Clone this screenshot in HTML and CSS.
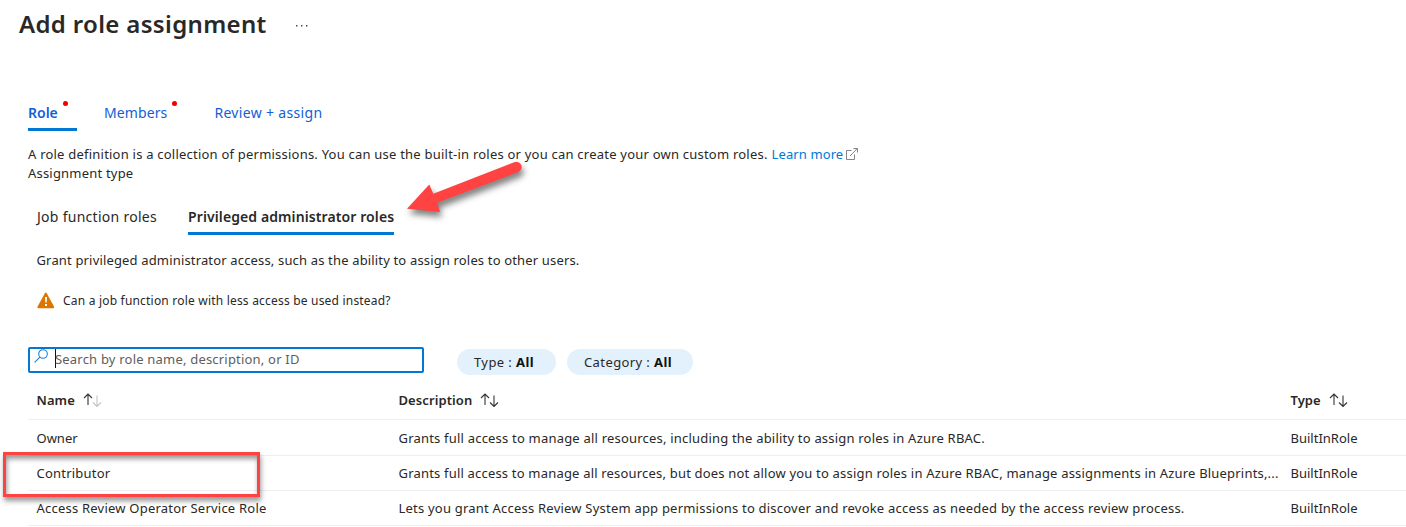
FILE: index.html
```
<!DOCTYPE html>
<html lang="en">
<head>
<meta charset="utf-8">
<title>Add role assignment</title>
<link rel="stylesheet" href="styles.css">
</head>
<body>
<header class="page-header">
  <h1 class="title">Add role assignment</h1>
  <svg class="more" width="14" height="4" viewBox="0 0 14 4"><path d="M1 1h1.4v1.4H1zM6 1h1.4v1.4H6zM11 1h1.4v1.4H11z" fill="#444"/></svg>
</header>
<nav class="steps">
  <a class="step step-active"><span class="t-role">Role</span><i class="dot"></i></a>
  <a class="step"><span class="t-members">Members</span><i class="dot"></i></a>
  <a class="step step-review"><span class="t-review">Review + assign</span></a>
</nav>
<section class="intro">
  <p class="line"><span class="t-intro">A role definition is a collection of permissions. You can use the built-in roles or you can create your own custom roles.</span><a class="link t-learn">Learn more</a><svg class="external" width="12" height="12" viewBox="0 0 12 12" fill="none" stroke="#858585"><path d="M5.5 2.5h-5v9h8v-5M4 8l7.2-7.4M7.5.5h4v4"/></svg></p>
  <p class="line"><span class="t-assign">Assignment type</span></p>
</section>
<div class="role-tabs">
  <a class="role-tab"><span class="t-job">Job function roles</span></a>
  <a class="role-tab role-tab-active"><span class="t-priv">Privileged administrator roles</span></a>
</div>
<p class="hint"><span class="t-grant">Grant privileged administrator access, such as the ability to assign roles to other users.</span></p>
<div class="warning">
  <svg width="18" height="17" viewBox="0 0 18 17"><path d="M7.9 1.2Q8.8-.2 9.7 1.2L17 14.6Q17.5 16.2 16 16.2H1.6Q0 16.2.6 14.6Z" fill="#db7500"/><path d="M8 5h2l-.3 5.6H8.3zM8 12h2v2H8z" fill="#fff"/></svg>
  <span class="t-warn">Can a job function role with less access be used instead?</span>
</div>
<div class="filters">
  <div class="search">
    <svg class="lens" width="14" height="14" viewBox="0 0 14 14" fill="none" stroke="#1f7fd6" stroke-width="1.1"><circle cx="9" cy="5" r="4.3"/><path d="M5.9 8.1.6 13.3"/></svg>
    <span class="caret"></span><span class="t-search">Search by role name, description, or ID</span>
  </div>
  <div class="pill pill-type"><span>Type : <b>All</b></span></div>
  <div class="pill pill-category"><span>Category : <b>All</b></span></div>
</div>
<div class="table">
  <div class="row head">
    <div class="cell"><span class="t-hname">Name</span><svg class="sort" width="19" height="14" viewBox="0 0 19 14" fill="none" stroke="#333" stroke-width="1.1"><path d="M5 12V1M1 5l4-4 4 4"/><path d="M14 2.5v11M10 9.5l4 4 4-4" stroke="#c4c4c4"/></svg></div>
    <div class="cell"><span class="t-hdesc">Description</span><svg class="sort" width="19" height="14" viewBox="0 0 19 14" fill="none" stroke="#333" stroke-width="1.1"><path d="M5 12V1M1 5l4-4 4 4M14 2.5v11M10 9.5l4 4 4-4"/></svg></div>
    <div class="cell"><span class="t-htype">Type</span><svg class="sort" width="19" height="14" viewBox="0 0 19 14" fill="none" stroke="#333" stroke-width="1.1"><path d="M5 12V1M1 5l4-4 4 4M14 2.5v11M10 9.5l4 4 4-4"/></svg></div>
  </div>
  <div class="row first">
    <div class="cell"><span class="t-owner">Owner</span></div>
    <div class="cell"><span class="t-d1">Grants full access to manage all resources, including the ability to assign roles in Azure RBAC.</span></div>
    <div class="cell"><span class="t-built">BuiltInRole</span></div>
  </div>
  <div class="row">
    <div class="cell"><span class="t-contrib">Contributor</span></div>
    <div class="cell"><span class="t-d2">Grants full access to manage all resources, but does not allow you to assign roles in Azure RBAC, manage assignments in Azure Blueprints,...</span></div>
    <div class="cell"><span class="t-built">BuiltInRole</span></div>
  </div>
  <div class="row">
    <div class="cell"><span class="t-arosr">Access Review Operator Service Role</span></div>
    <div class="cell"><span class="t-d3">Lets you grant Access Review System app permissions to discover and revoke access as needed by the access review process.</span></div>
    <div class="cell"><span class="t-built">BuiltInRole</span></div>
  </div>
</div>
<div class="highlight"></div>
<svg class="arrow" width="140" height="80" viewBox="0 0 140 80"><path d="M7 48.7 29.3 24.4 33.3 33.7 114.2 2.2A5.3 5.3 0 0 1 118.4 12L37.3 42.7 40 52Z" fill="#ff4242"/></svg>
</body>
</html>
```
FILE: styles.css
```
* { box-sizing: border-box; }
body { margin: 0; width: 1406px; height: 527px; overflow: hidden; background: #fff; color: #292827; font: 13px/20px "Noto Sans", "Open Sans", sans-serif; white-space: nowrap; }
h1, p { margin: 0; font-weight: inherit; }
.page-header { display: flex; align-items: center; height: 48px; padding-left: 19px; gap: 28px; }
.title { font-size: 24px; font-weight: 600; line-height: 48px; letter-spacing: .34px; }
.more { margin-top: 3px; }
.steps { display: flex; height: 83px; padding-left: 28px; align-items: flex-end; gap: 27px; font-size: 14px; color: #1160d8; }
.step { display: flex; height: 35px; padding-top: 7px; border-bottom: 3px solid transparent; gap: 5px; }
.step-active { width: 49px; border-color: #0078d4; font-weight: 600; }
.step-review { margin-left: 10px; }
.dot { width: 5px; height: 5px; border-radius: 50%; background: #f00000; margin-top: -2px; }
.t-members { letter-spacing: .1px; }
.t-review { letter-spacing: .33px; }
.intro { padding: 14px 0 0 28px; height: 67px; }
.line { display: flex; height: 19px; line-height: 19px; }
.t-intro { letter-spacing: .22px; }
.t-assign { letter-spacing: .2px; }
.link { color: #0078d4; margin-left: 4px; letter-spacing: .1px; }
.external { margin: 3px 0 0 3px; }
.role-tabs { display: flex; padding-left: 37px; gap: 31px; height: 37px; font-size: 14px; line-height: 38px; }
.role-tab { height: 37px; border-bottom: 3px solid transparent; }
.role-tab-active { border-color: #0078d4; font-weight: 600; }
.t-job { letter-spacing: .28px; }
.t-priv { letter-spacing: .1px; }
.hint { padding: 15px 0 0 36.5px; height: 51px; letter-spacing: .16px; }
.warning { display: flex; align-items: center; height: 28px; padding-left: 37px; gap: 8px; font-size: 12px; letter-spacing: .2px; }
.t-warn { padding-top: 1px; }
.filters { display: flex; align-items: center; height: 67px; padding: 26px 0 0 28px; margin-top: 1px; }
.search { display: flex; width: 396px; height: 26px; margin-top: -4px; border: 2px solid #0078d4; border-radius: 2px; color: #605e5c; }
.t-search { letter-spacing: .2px; margin-left: -1px; }
.lens { margin: 0 7px 0 4px; }
.caret { width: 1px; height: 19px; background: #111; }
.pill { height: 26px; border-radius: 13px; background: #e3f1fc; padding-left: 17px; line-height: 26px; letter-spacing: .4px; }
.pill b { font-weight: 700; color: #111; }
.pill-type { width: 99px; margin-left: 33px; }
.pill-category { width: 126px; margin-left: 11px; }
.table { margin-left: 28px; }
.row { display: grid; grid-template-columns: 362px 892px 1fr; height: 35px; padding-left: 8.5px; border-bottom: 1px solid #eeeeee; align-items: center; }
.first { height: 36px; padding-top: 1px; }
.head { height: 38px; font-weight: 600; padding-bottom: 2px; }
.cell { display: flex; }
.sort { margin: 3px 0 0 8px; }
.t-hname { letter-spacing: .1px; }
.t-hdesc { letter-spacing: .1px; }
.t-d1 { letter-spacing: .2px; }
.t-d2 { letter-spacing: .19px; }
.t-d3 { letter-spacing: .215px; }
.t-arosr, .t-contrib { letter-spacing: .22px; }
.highlight { position: absolute; left: 3px; top: 452px; width: 257px; height: 45px; border: 3px solid #ff4242; box-shadow: 1px 4px 5px rgba(0,0,0,.4), inset 1px 4px 5px rgba(0,0,0,.4); }
.arrow { position: absolute; left: 400px; top: 160px; filter: drop-shadow(2px 5px 3px rgba(0,0,0,.5)); }
```
